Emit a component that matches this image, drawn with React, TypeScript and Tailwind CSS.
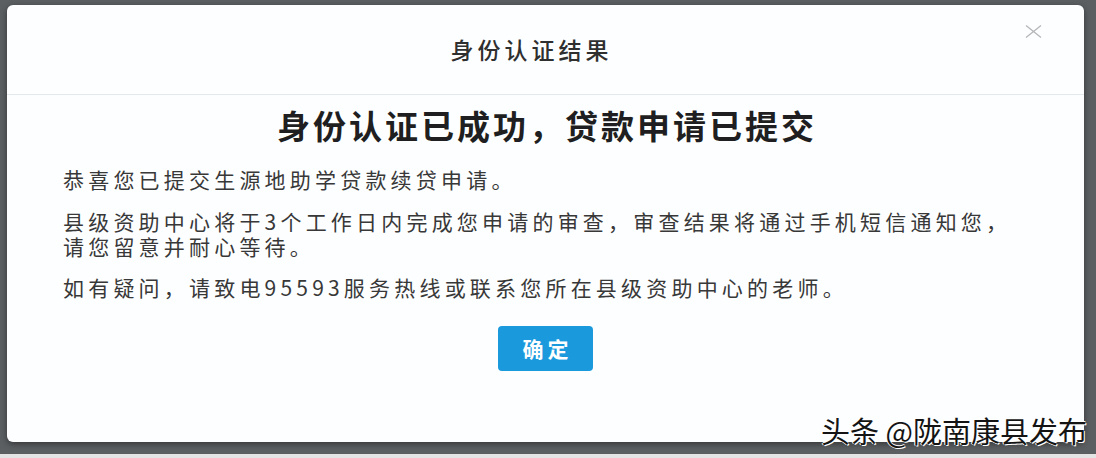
import React from "react"

const cjk = "font-['Microsoft_YaHei','Noto_Sans_CJK_SC','Noto_Sans',sans-serif]"

function CloseIcon() {
  return (
    <svg width="17" height="13" viewBox="0 0 17 13" fill="none">
      <path d="M1 0.5L16 12.5M16 0.5L1 12.5" stroke="#b4b6b8" strokeWidth="1.3" />
    </svg>
  )
}

const reviewText = "县级资助中心将于3个工作日内完成您申请的审查，审查结果将通过手机短信通知您，\n请您留意并耐心等待。"

export default function App() {
  return (
    <div className={`relative w-full h-[458px] flex flex-col ${cjk}`}>
      <div className="flex-1 bg-[#5c5f62] pt-[5px] pl-[7px] pr-[12px]">
        <div className="h-[437px] bg-[#fdfeff] rounded-[6px] shadow-[0_2px_6px_rgba(0,0,0,0.45)] flex flex-col">
          {/* header */}
          <div className="relative h-[90px] border-b border-[#e3e8ee] flex items-center justify-center pr-[28px]">
            <h2 className="text-[23px] font-medium tracking-[4px] text-[#2f2f2f]">身份认证结果</h2>
            <button className="absolute right-[42px] top-[20px] w-[17px] h-[13px] flex items-center justify-center">
              <CloseIcon />
            </button>
          </div>

          {/* body */}
          <div className="pt-[12px] flex flex-col">
            <h1 className="text-center text-[33px] leading-[36px] font-bold tracking-[3px] pl-[3px] text-[#1f1f22]">
              身份认证已成功，贷款申请已提交
            </h1>
            <div className="px-[56px] text-[21px] leading-[25px] tracking-[4.2px] text-[#383838]">
              <p className="mt-[24px]">恭喜您已提交生源地助学贷款续贷申请。</p>
              <p className="mt-[17px] whitespace-pre-line">{reviewText}</p>
              <p className="mt-[16px]">如有疑问，请致电95593服务热线或联系您所在县级资助中心的老师。</p>
            </div>
            <div className="mt-[26px] flex justify-center">
              <button className="w-[95px] h-[45px] rounded-[4px] bg-[#1b99dd] text-white text-[21px] font-bold tracking-[4px] pl-[4px]">
                确定
              </button>
            </div>
          </div>
        </div>
      </div>
      <div className="h-[4px] bg-[#e4e4e4]" />

      {/* watermark */}
      <div className="absolute right-[9px] bottom-[13px] text-[29px] leading-[30px] text-[#141414] [text-shadow:1px_1px_0_#fff,-1px_0_0_#fff,0_-1px_0_#fff]">
        头条 @陇南康县发布
      </div>
    </div>
  )
}
